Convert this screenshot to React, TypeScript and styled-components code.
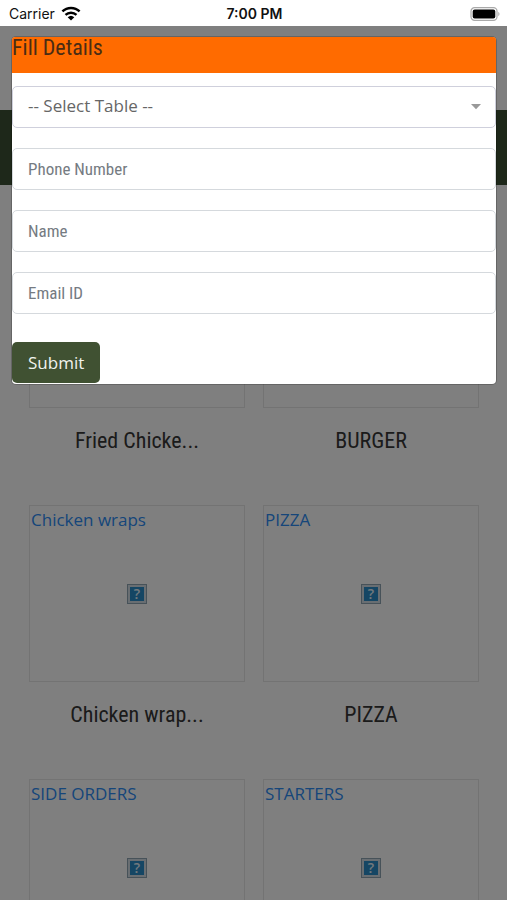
import React from "react";
import styled, { createGlobalStyle } from "styled-components";

const condensed = `"Roboto Condensed", "Liberation Sans Narrow", Roboto, sans-serif`;
const body = `"Open Sans", "Noto Sans", sans-serif`;

const GlobalStyle = createGlobalStyle`
  *, *::before, *::after { box-sizing: border-box; }
  body { margin: 0; background: #ffffff; font-family: ${body}; color: #363636; }
`;

const Screen = styled.div`
  display: flex;
  flex-direction: column;
  height: 100vh;
  overflow: hidden;
`;

const StatusBar = styled.header`
  display: grid;
  grid-template-columns: 1fr auto 1fr;
  align-items: center;
  flex: none;
  height: 26px;
  padding: 1px 7px 0 9px;
  background: #ffffff;
  color: #111111;
  font-family: Inter, sans-serif;
  font-size: 14px;
`;

const Carrier = styled.div`
  display: flex;
  align-items: center;
  gap: 6px;
`;

const Clock = styled.time`
  font-weight: 600;
`;

const Battery = styled.svg`
  justify-self: end;
`;

const Viewport = styled.div`
  position: relative;
  flex: 1;
  min-height: 0;
  overflow: hidden;
`;

const SiteHeader = styled.div`
  height: 84px;
  background: #ffffff;
`;

const SiteNav = styled.nav`
  height: 75px;
  background: #3d5135;
`;

const Menu = styled.main`
  display: grid;
  grid-template-columns: 1fr 1fr;
  gap: 46px 18px;
  padding: 46px 28px 46px 29px;
`;

const Item = styled.article`
  display: flex;
  flex-direction: column;
  gap: 16px;
`;

const Picture = styled.a`
  display: grid;
  grid-template-rows: 28px 1fr 28px;
  justify-items: center;
  align-items: center;
  height: 177px;
  padding: 0 1px;
  border: 1px solid #e6e6e6;
  color: #2c8cf4;
  font-size: 17px;
  line-height: 28px;
  text-decoration: none;
`;

const AltText = styled.span`
  justify-self: start;
`;

const MissingImage = styled.span`
  display: flex;
  align-items: center;
  justify-content: center;
  width: 20px;
  height: 20px;
  border: 3px solid #d2dde4;
  outline: 1px solid #8ea4b3;
  outline-offset: -1px;
  background: #2a8cc8;
  color: #e4f2fb;
  font-size: 14px;
  font-weight: 600;
  line-height: 14px;
`;

const ItemName = styled.h2`
  margin: 0;
  height: 35px;
  font-family: ${condensed};
  font-size: 22px;
  font-weight: 400;
  line-height: 34px;
  text-align: center;
`;

const Backdrop = styled.div`
  position: absolute;
  inset: 0;
  padding: 11px 11px 0 12px;
  background: rgba(0, 0, 0, 0.5);
`;

const Dialog = styled.section`
  border-radius: 4px;
  background: #ffffff;
  box-shadow: 0 0 0 1px rgba(0, 0, 0, 0.2);
`;

const DialogTitle = styled.h1`
  margin: 0;
  height: 36px;
  border-radius: 3px 3px 0 0;
  background: #ff6b00;
  color: #4a2c14;
  font-family: ${condensed};
  font-size: 22px;
  font-weight: 400;
  line-height: 22px;
`;

const Form = styled.form`
  display: flex;
  flex-direction: column;
  gap: 20px;
  padding: 13px 0 1px;
`;

const Field = styled.label`
  display: block;
  position: relative;
`;

const controlStyle = `
  display: block;
  width: 100%;
  height: 42px;
  margin: 0;
  padding: 0 15px;
  border: 1px solid #d5d9dd;
  border-radius: 5px;
  background: #ffffff;
  color: #6c757d;
  outline: none;
`;

const TextInput = styled.input`
  ${controlStyle}
  font-family: ${condensed};
  font-size: 17px;
  &::placeholder { color: #757b82; opacity: 1; }
`;

const TableSelect = styled.select`
  ${controlStyle}
  padding-bottom: 3px;
  appearance: none;
  border-color: #cfd0dc;
  color: #666666;
  font-family: ${body};
  font-size: 17px;
`;

const Caret = styled.svg`
  position: absolute;
  top: 18px;
  right: 15px;
  pointer-events: none;
`;

const Submit = styled.button`
  align-self: flex-start;
  height: 41px;
  margin: 8px 0 0;
  padding: 0 16px;
  border: 0;
  border-radius: 5px;
  background: #405132;
  color: #f0f3ee;
  font-family: ${body};
  font-size: 17px;
`;

const items = [
  { alt: "Fried Chicken", name: "Fried Chicke..." },
  { alt: "BURGER", name: "BURGER" },
  { alt: "Chicken wraps", name: "Chicken wrap..." },
  { alt: "PIZZA", name: "PIZZA" },
  { alt: "SIDE ORDERS" },
  { alt: "STARTERS" },
];

const fields = [
  { label: "Phone Number", type: "tel" },
  { label: "Name", type: "text" },
  { label: "Email ID", type: "email" },
];

export default function App() {
  return (
    <Screen>
      <GlobalStyle />
      <StatusBar>
        <Carrier>
          Carrier
          <svg width="20" height="15" viewBox="0 0 20 15" aria-label="Wi-Fi">
            <path d="M1.4 5.4a12.4 12.4 0 0 1 17.2 0" fill="none" stroke="#000" strokeWidth="2.5" />
            <path d="M4.5 8.9a8 8 0 0 1 11 0" fill="none" stroke="#000" strokeWidth="2.4" />
            <path d="M10 14.4 6.7 11.2a4.8 4.8 0 0 1 6.6 0z" fill="#000" />
          </svg>
        </Carrier>
        <Clock>7:00 PM</Clock>
        <Battery width="30" height="14" viewBox="0 0 30 14" aria-label="Battery full">
          <rect x="1" y="0.7" width="26" height="12.6" rx="3.6" fill="#fff" stroke="#a9a9a9" strokeWidth="1.2" />
          <rect x="2.7" y="2.4" width="22.6" height="9.2" rx="2" fill="#000" />
          <path d="M28.3 4.8c1.6.7 1.6 3.7 0 4.4z" fill="#a9a9a9" />
        </Battery>
      </StatusBar>
      <Viewport>
        <SiteHeader />
        <SiteNav />
        <Menu>
          {items.map((item) => (
            <Item key={item.alt}>
              <Picture href="#">
                <AltText>{item.alt}</AltText>
                <MissingImage aria-hidden="true">?</MissingImage>
              </Picture>
              {item.name && <ItemName>{item.name}</ItemName>}
            </Item>
          ))}
        </Menu>
        <Backdrop>
          <Dialog role="dialog" aria-labelledby="dialog-title">
            <DialogTitle id="dialog-title">Fill Details</DialogTitle>
            <Form onSubmit={(event) => event.preventDefault()}>
              <Field>
                <TableSelect aria-label="Table" defaultValue="">
                  <option value="">-- Select Table --</option>
                </TableSelect>
                <Caret width="10" height="6" viewBox="0 0 10 6" aria-hidden="true">
                  <path d="M0 0h10L5 5.2z" fill="#999" />
                </Caret>
              </Field>
              {fields.map((field) => (
                <Field key={field.label}>
                  <TextInput type={field.type} placeholder={field.label} aria-label={field.label} />
                </Field>
              ))}
              <Submit type="submit">Submit</Submit>
            </Form>
          </Dialog>
        </Backdrop>
      </Viewport>
    </Screen>
  );
}
